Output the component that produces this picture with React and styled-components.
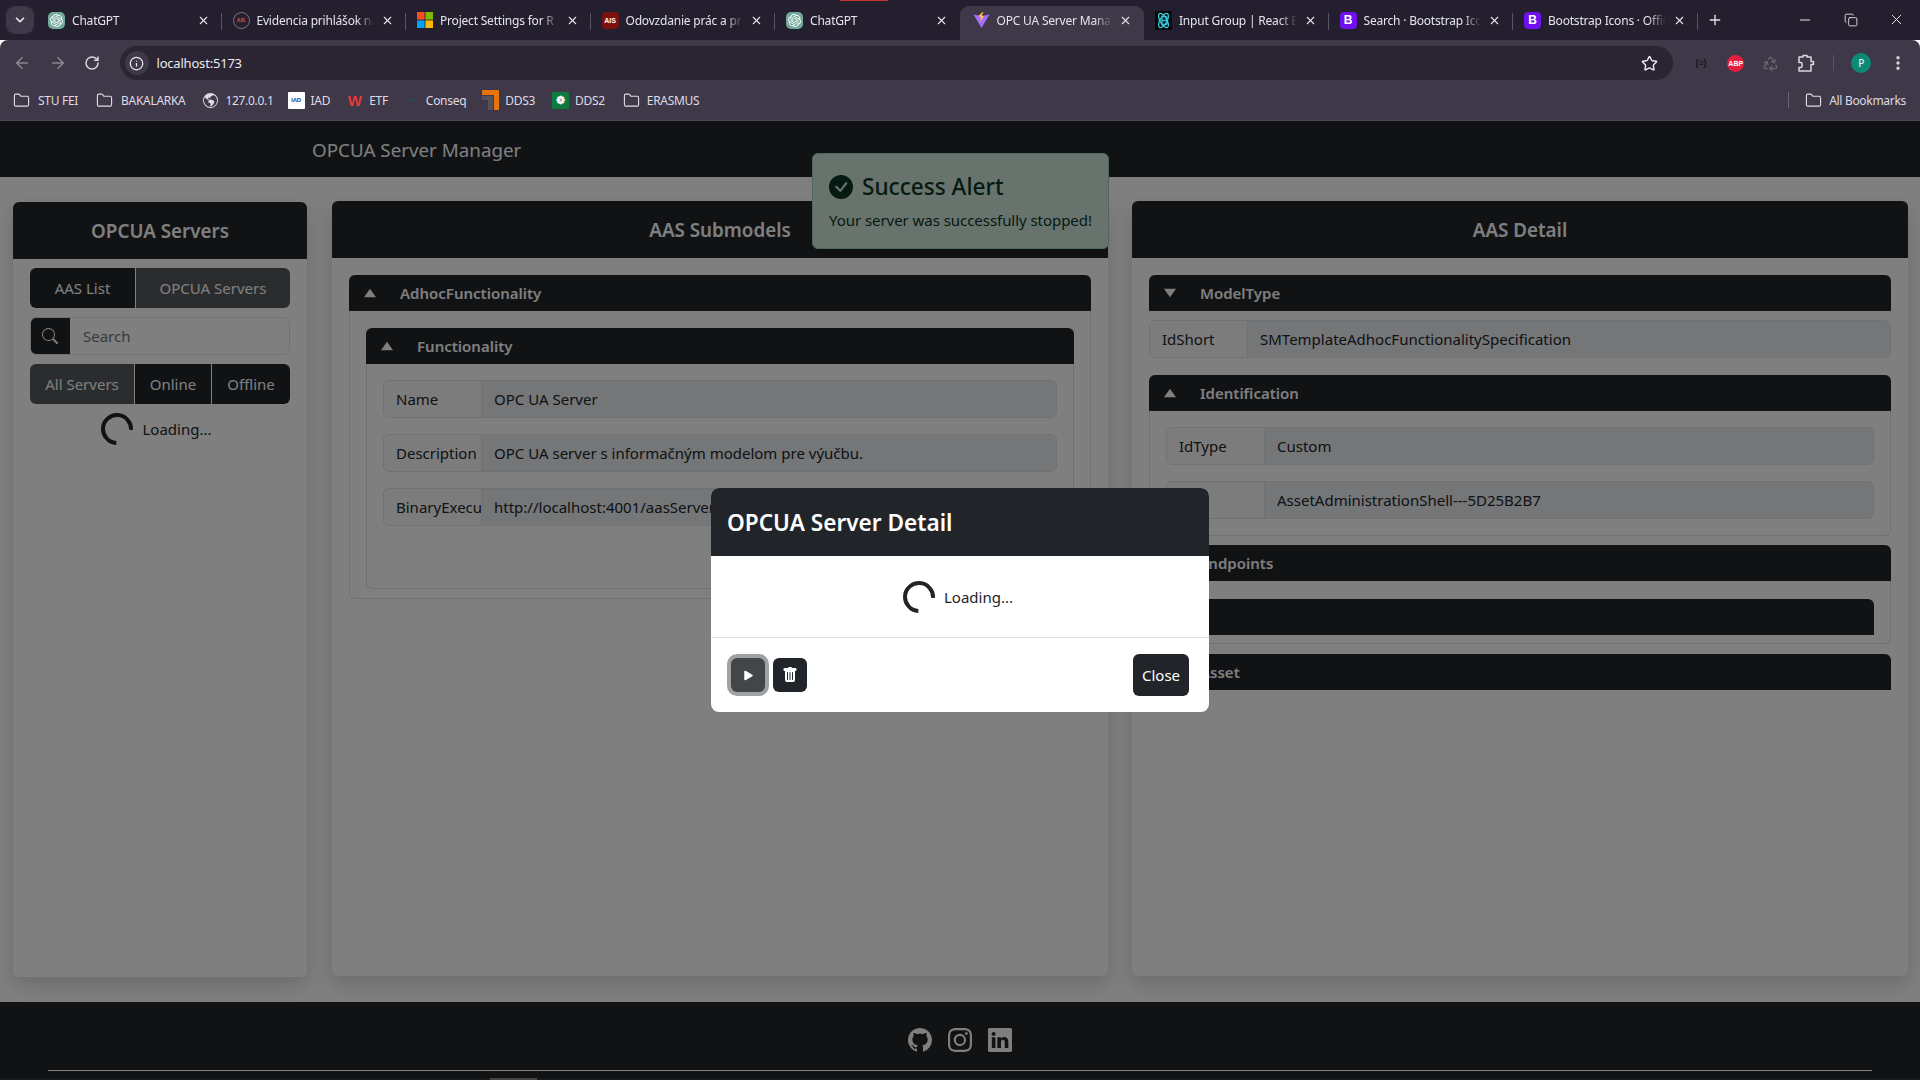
import React from 'react';
import styled, { createGlobalStyle } from 'styled-components';
import { ArrowLeft, ArrowRight, RotateCw, Info, Star, Folder, Plus, Minus, X, ChevronDown, Recycle, Copy, EllipsisVertical } from 'lucide-react';
import { BsGithub, BsInstagram, BsLinkedin, BsSearch, BsCheckCircleFill, BsPlayFill, BsTrashFill, BsGlobeAmericas } from 'react-icons/bs';
import { SiOpenai } from 'react-icons/si';

const GlobalStyle = createGlobalStyle`
  * { box-sizing: border-box; }
  html, body { margin: 0; padding: 0; background: #fff; overflow: hidden; }
  body { font-family: "Noto Sans", "Open Sans", sans-serif; font-size: 15px; color: #212529; }
`;

const Screen = styled.div`
  width: 1920px;
  height: 1080px;
  display: flex;
  flex-direction: column;
  overflow: hidden;
`;

/* browser chrome */
const TabStrip = styled.div`
  position: relative;
  height: 40px;
  flex: none;
  display: flex;
  align-items: flex-end;
  padding-left: 37px;
  background: #241f2e;
  color: #e6e3ec;
`;

const TabListButton = styled.div`
  position: absolute;
  left: 6px;
  top: 6px;
  width: 28px;
  height: 28px;
  border-radius: 9px;
  background: #3e3848;
  display: flex;
  align-items: center;
  justify-content: center;
`;

const RedMark = styled.div`
  position: absolute;
  left: 840px;
  top: 0;
  width: 48px;
  height: 1px;
  background: #c8312c;
`;

const TabItem = styled.div`
  position: relative;
  width: 184.5px;
  height: 34px;
  flex: none;
  display: flex;
  align-items: center;
  gap: 7px;
  padding: 0 12px 6px ${p => (p.$active ? 13 : 11)}px;
  font-size: 12px;
  border-radius: 9px 9px 0 0;
  background: ${p => (p.$active ? '#3e3848' : 'transparent')};
  &::after {
    content: '';
    display: ${p => (p.$sep ? 'block' : 'none')};
    position: absolute;
    right: 0;
    top: 7px;
    width: 1px;
    height: 17px;
    background: #5a5465;
  }
`;

const TabTitle = styled.span`
  flex: 1;
  min-width: 0;
  white-space: nowrap;
  overflow: hidden;
  letter-spacing: -0.2px;
  -webkit-mask-image: linear-gradient(to right, #000 85%, transparent);
  mask-image: linear-gradient(to right, #000 85%, transparent);
`;

const Favicon = styled.span`
  width: 17px;
  height: 17px;
  flex: none;
  display: flex;
  align-items: center;
  justify-content: center;
  border-radius: ${p => p.$radius || 3}px;
  background: ${p => p.$bg || 'transparent'};
  border: ${p => (p.$ring ? `1.5px solid ${p.$ring}` : 'none')};
  color: ${p => p.$fg || '#fff'};
  font-size: ${p => p.$size || 12}px;
  font-weight: 700;
  font-family: "Liberation Sans", sans-serif;
`;

const StripButton = styled.div`
  position: absolute;
  top: ${p => p.$y || 12}px;
  left: ${p => p.$x}px;
  display: flex;
`;

const Toolbar = styled.div`
  height: 40px;
  flex: none;
  display: flex;
  align-items: center;
  padding: 6px 13px 0 13px;
  background: #3e3848;
  border-radius: 8px 8px 0 0;
  color: #d9d6df;
`;

const NavIcon = styled.span`
  width: 35.5px;
  display: flex;
  color: ${p => (p.$dim ? '#8a8593' : '#d9d6df')};
`;

const AddressBar = styled.div`
  flex: none;
  width: 1553px;
  height: 34px;
  padding: 0 15px 0 5px;
  display: flex;
  align-items: center;
  border-radius: 17px;
  background: #2a2433;
  font-size: 13px;
  color: #eceaf0;
`;

const SiteInfo = styled.span`
  width: 24px;
  height: 24px;
  margin-right: 8px;
  border-radius: 50%;
  background: #3e3848;
  display: flex;
  align-items: center;
  justify-content: center;
`;

const Url = styled.span`
  flex: 1;
  letter-spacing: -0.2px;
`;

const ExtIcons = styled.div`
  flex: 1;
  display: flex;
  align-items: center;
  justify-content: space-between;
  padding: 0 0 0 20px;
`;

const ExtDivider = styled.span`
  width: 1px;
  height: 16px;
  background: #5a5465;
`;

const AbpBadge = styled.span`
  width: 17px;
  height: 17px;
  border-radius: 50%;
  background: #e5203f;
  color: #fff;
  font-size: 7px;
  font-weight: 700;
  display: flex;
  align-items: center;
  justify-content: center;
  font-family: "Liberation Sans", sans-serif;
`;

const Profile = styled.span`
  width: 20px;
  height: 20px;
  border-radius: 50%;
  background: #0c8a76;
  color: #fff;
  font-size: 10px;
  display: flex;
  align-items: center;
  justify-content: center;
`;

const Bookmarks = styled.div`
  height: 41px;
  flex: none;
  display: flex;
  align-items: center;
  padding: 0 14px 0 13px;
  background: #3e3848;
  border-bottom: 1px solid #4c4656;
  font-size: 12px;
  color: #dedbe4;
`;

const Bookmark = styled.div`
  display: flex;
  align-items: center;
  gap: ${p => p.$gap ?? 6}px;
  margin-right: ${p => p.$mr ?? 17}px;
  letter-spacing: -0.3px;
  white-space: nowrap;
`;

const BookmarkSpacer = styled.div`
  flex: 1;
`;

const BookmarkDivider = styled.span`
  width: 1px;
  height: 16px;
  margin-right: 16px;
  background: #6a6475;
`;

/* page */
const Page = styled.div`
  position: relative;
  flex: 1;
  min-height: 0;
  display: flex;
  flex-direction: column;
  background: #fff;
`;

const Navbar = styled.header`
  height: 56px;
  flex: none;
  display: flex;
  align-items: center;
  padding: 1px 0 0 312px;
  background: #212529;
  color: #fff;
  font-size: 18.8px;
`;

const Main = styled.main`
  flex: 1;
  min-height: 0;
  display: flex;
  align-items: flex-start;
  gap: 24px;
  padding: 24px 12px 25px 13px;
`;

const Card = styled.section`
  width: ${p => p.$w}px;
  height: ${p => p.$h || 775}px;
  margin-top: ${p => p.$mt || 0}px;
  margin-right: ${p => p.$mr || 0}px;
  flex: none;
  border-radius: 6px;
  background: #fff;
  box-shadow: 0 8px 20px rgba(0, 0, 0, 0.16);
`;

const CardHeader = styled.div`
  height: 57px;
  display: flex;
  align-items: center;
  justify-content: center;
  border-radius: 6px 6px 0 0;
  background: #212529;
  color: #fff;
  font-size: 18.8px;
  font-weight: 600;
`;

const CardBody = styled.div`
  padding: ${p => p.$pt ?? 17}px 17px 0;
`;

const ButtonGroup = styled.div`
  display: flex;
  height: 40px;
  margin-bottom: 9px;
  gap: 1px;
  border-radius: 6px;
  overflow: hidden;
`;

const GroupButton = styled.div`
  width: ${p => p.$w}px;
  flex: ${p => (p.$w ? 'none' : 1)};
  display: flex;
  align-items: center;
  justify-content: center;
  background: ${p => (p.$active ? '#55585c' : '#212529')};
  color: #fff;
`;

const SearchGroup = styled.div`
  display: flex;
  height: 38px;
  margin-bottom: 9px;
  border: 1px solid #dee2e6;
  border-radius: 6px;
  overflow: hidden;
`;

const SearchIcon = styled.span`
  width: 40px;
  margin: -1px 0 -1px -1px;
  display: flex;
  align-items: center;
  justify-content: center;
  background: #212529;
  color: #fff;
`;

const SearchPlaceholder = styled.span`
  flex: 1;
  display: flex;
  align-items: center;
  padding-left: 13px;
  color: #6c757d;
`;

const LoadingRow = styled.div`
  display: flex;
  align-items: center;
  justify-content: center;
  gap: 9px;
  margin-right: ${p => p.$shift || 0}px;
`;

const Spinner = styled.span`
  width: 32px;
  height: 32px;
  flex: none;
  border: 4px solid #212529;
  border-right-color: transparent;
  border-radius: 50%;
  transform: rotate(48deg);
`;

const AccordionHead = styled.div`
  height: 36px;
  display: flex;
  align-items: center;
  padding-left: 14px;
  gap: 23px;
  border-radius: 6px 6px 0 0;
  background: #212529;
  color: #fff;
  font-weight: 600;
`;

const Section = styled.div`
  margin-bottom: ${p => p.$mb || 0}px;
`;

const SectionBody = styled.div`
  padding: ${p => p.$pt ?? 16}px 16px ${p => p.$pb ?? 0}px;
  border: 1px solid #dee2e6;
  border-top: 0;
  border-radius: 0 0 6px 6px;
`;

const Field = styled.div`
  display: flex;
  height: 38px;
  margin-bottom: ${p => p.$mb ?? 16}px;
  border: 1px solid #dee2e6;
  border-radius: 6px;
  overflow: hidden;
`;

const FieldLabel = styled.span`
  width: 98px;
  flex: none;
  padding: 0 0 0 12px;
  display: flex;
  align-items: center;
  overflow: hidden;
  white-space: nowrap;
  background: #f8f9fa;
  border-right: 1px solid #dee2e6;
`;

const FieldValue = styled.span`
  flex: 1;
  padding-left: 12px;
  display: flex;
  align-items: center;
  white-space: nowrap;
  overflow: hidden;
  background: #e9ecef;
`;

const EndpointBar = styled.div`
  height: 36px;
  border-radius: 6px 6px 0 0;
  background: #212529;
`;

const Alert = styled.div`
  position: absolute;
  left: 812px;
  top: 32px;
  width: 297px;
  height: 96px;
  padding: 15px 16px;
  border: 1px solid #a3cfbb;
  border-radius: 6px;
  background: #d1e7dd;
  color: #0a3622;
`;

const AlertHeading = styled.div`
  display: flex;
  align-items: center;
  gap: 9px;
  margin-bottom: 3px;
  font-size: 22.6px;
  line-height: 36px;
  font-weight: 500;
`;

const AlertText = styled.div`
  white-space: nowrap;
  line-height: 24px;
  letter-spacing: -0.05px;
`;

const Footer = styled.footer`
  position: relative;
  height: 78px;
  flex: none;
  padding: 0 48px;
  background: #212529;
  color: #fff;
`;

const SocialRow = styled.div`
  height: 69px;
  padding-top: 7px;
  display: flex;
  align-items: center;
  justify-content: center;
  gap: 16px;
  border-bottom: 1px solid #fff;
`;

const ScrollTrack = styled.div`
  position: absolute;
  left: 0;
  right: 0;
  bottom: 0;
  height: 2px;
  background: #303437;
`;

const ScrollThumb = styled.div`
  margin-left: 490px;
  width: 47px;
  height: 2px;
  background: #8a8a8a;
`;

const Backdrop = styled.div`
  position: absolute;
  inset: 0;
  display: flex;
  justify-content: center;
  align-items: flex-start;
  padding-top: 367px;
  background: rgba(0, 0, 0, 0.5);
`;

const Modal = styled.div`
  width: 498px;
  height: 224px;
  display: flex;
  flex-direction: column;
  border-radius: 8px;
  overflow: hidden;
  background: #fff;
`;

const ModalHeader = styled.div`
  height: 68px;
  flex: none;
  display: flex;
  align-items: center;
  padding: 1px 0 0 16px;
  background: #212529;
  color: #fff;
  font-size: 22.6px;
  font-weight: 600;
`;

const ModalBody = styled.div`
  height: 82px;
  flex: none;
  display: flex;
  align-items: center;
  justify-content: center;
  padding-top: 1px;
  border-bottom: 1px solid #dee2e6;
`;

const ModalFooter = styled.div`
  flex: 1;
  display: flex;
  align-items: center;
  gap: 5px;
  padding: 0 20px 0 20px;
`;

const IconButton = styled.span`
  width: 34px;
  height: 34px;
  display: flex;
  align-items: center;
  justify-content: center;
  border-radius: 6px;
  background: ${p => (p.$focus ? '#424649' : '#212529')};
  color: #fff;
  margin-right: ${p => (p.$focus ? 3 : 0)}px;
  box-shadow: ${p => (p.$focus ? '0 0 0 4px rgba(66, 70, 73, 0.5)' : 'none')};
`;

const CloseButton = styled.span`
  margin-left: auto;
  width: 56px;
  height: 42px;
  display: flex;
  align-items: center;
  justify-content: center;
  border-radius: 6px;
  background: #212529;
  color: #fff;
`;

const TriangleIcon = ({ down }) => (
  <svg width="14" height="10" viewBox="0 0 14 10" style={down ? { transform: 'rotate(180deg)' } : undefined}>
    <path d="M7 .8 13 9.2H1z" fill="currentColor" />
  </svg>
);

const MicrosoftIcon = () => (
  <svg width="16" height="16" viewBox="0 0 16 16">
    <path d="M0 0h7.6v7.6H0z" fill="#f25022" />
    <path d="M8.4 0H16v7.6H8.4z" fill="#7fba00" />
    <path d="M0 8.4h7.6V16H0z" fill="#00a4ef" />
    <path d="M8.4 8.4H16V16H8.4z" fill="#ffb900" />
  </svg>
);

const ViteIcon = () => (
  <svg width="17" height="17" viewBox="0 0 17 17">
    <path d="M.5 2.5 8.5 16l8-13.5-5 1-3 .6-3-.6z" fill="#a66bff" />
    <path d="M9.5 0 5.5 4l2.5 1-1 5 4-6-2.3-.4L10.5 0z" fill="#ffcc33" />
  </svg>
);

const ReactBootstrapIcon = () => (
  <svg width="17" height="19" viewBox="0 0 17 19" fill="none" stroke="#38c8de" strokeWidth="1.3">
    <rect width="17" height="19" fill="#0a0a0a" stroke="none" />
    <ellipse cx="8.5" cy="9.5" rx="3.4" ry="8" transform="rotate(30 8.5 9.5)" />
    <ellipse cx="8.5" cy="9.5" rx="3.4" ry="8" transform="rotate(-30 8.5 9.5)" />
    <path d="M7 5.5h3a1.8 1.8 0 0 1 0 4H7zm0 4h3.4a2 2 0 0 1 0 4H7z" />
  </svg>
);

const ExtensionIcon = () => (
  <svg width="18" height="20" viewBox="0 0 18 20" fill="none" stroke="currentColor" strokeWidth="1.5" strokeLinejoin="round">
    <path d="M2 4h4V2.500h4V4h4v4.500h2.500v3H14V18H2v-3.500h2c1.500 0 1.500-5 0-5H2z" />
  </svg>
);

const Dds3Icon = () => (
  <svg width="17" height="20" viewBox="0 0 17 20">
    <path d="M0 0h17v20h-5V5H0z" fill="#e8730c" />
    <path d="M0 6h11v14H6V10H0z" fill="#55505c" />
  </svg>
);

const tabs = [
  { title: 'ChatGPT', icon: <Favicon $bg="#74aa9c" $radius={5}><SiOpenai size={13} /></Favicon>, sep: true },
  { title: 'Evidencia prihlášok na', icon: <Favicon $bg="#2b1f2b" $radius={9} $ring="#7a7480" $fg="#d65050" $size={5}>AIS</Favicon>, sep: true },
  { title: 'Project Settings for R', icon: <MicrosoftIcon />, sep: true },
  { title: 'Odovzdanie prác a pr', icon: <Favicon $bg="#7a1010" $radius={4} $size={7}>AIS</Favicon>, sep: true },
  { title: 'ChatGPT', icon: <Favicon $bg="#74aa9c" $radius={5}><SiOpenai size={13} /></Favicon> },
  { title: 'OPC UA Server Mana', icon: <ViteIcon />, active: true },
  { title: 'Input Group | React B', icon: <ReactBootstrapIcon />, sep: true },
  { title: 'Search · Bootstrap Ico', icon: <Favicon $bg="#7010f0" $radius={4}>B</Favicon>, sep: true },
  { title: 'Bootstrap Icons · Offic', icon: <Favicon $bg="#7010f0" $radius={4}>B</Favicon>, sep: true },
];

const bookmarks = [
  { label: 'STU FEI', icon: <Folder size={17} strokeWidth={1.6} />, gap: 8, mr: 18 },
  { label: 'BAKALARKA', icon: <Folder size={17} strokeWidth={1.6} />, gap: 8, mr: 18 },
  { label: '127.0.0.1', icon: <BsGlobeAmericas size={15} />, gap: 7, mr: 14 },
  { label: 'IAD', icon: <Favicon $bg="#fff" $fg="#1b3f8f" $radius={1} $size={6}>IAD</Favicon>, mr: 16 },
  { label: 'ETF', icon: <Favicon $fg="#e53935" $size={15}>W</Favicon>, mr: 15 },
  { label: 'Conseq', icon: <Favicon $fg="#2f4a63" $size={6}>▪▪▪▪</Favicon>, mr: 16 },
  { label: 'DDS3', icon: <Dds3Icon />, mr: 17 },
  { label: 'DDS2', icon: <Favicon $bg="#0d7a3e" $radius={1} $fg="#eee" $size={11}>❁</Favicon>, mr: 18 },
  { label: 'ERASMUS', icon: <Folder size={17} strokeWidth={1.6} />, gap: 7, mr: 0 },
];

const BrowserChrome = () => (
  <>
    <TabStrip>
      <RedMark />
      <TabListButton><ChevronDown size={14} strokeWidth={3} /></TabListButton>
      {tabs.map((t, i) => (
        <TabItem key={i} $active={t.active} $sep={t.sep}>
          {t.icon}
          <TabTitle>{t.title}</TabTitle>
          <X size={13} strokeWidth={2} />
        </TabItem>
      ))}
      <StripButton $x={1707}><Plus size={16} strokeWidth={2} /></StripButton>
      <StripButton $x={1797}><Minus size={16} strokeWidth={1.5} /></StripButton>
      <StripButton $x={1844} $y={13}><Copy size={14} strokeWidth={1.5} /></StripButton>
      <StripButton $x={1888} $y={11}><X size={17} strokeWidth={1.4} /></StripButton>
    </TabStrip>
    <Toolbar>
      <NavIcon $dim><ArrowLeft size={18} /></NavIcon>
      <NavIcon $dim><ArrowRight size={18} /></NavIcon>
      <NavIcon><RotateCw size={16} strokeWidth={2.2} /></NavIcon>
      <AddressBar>
        <SiteInfo><Info size={15} /></SiteInfo>
        <Url>localhost:5173</Url>
        <Star size={17} strokeWidth={2} />
      </AddressBar>
      <ExtIcons>
        <Favicon $fg="#15131a" $size={9}>(≡)</Favicon>
        <AbpBadge>ABP</AbpBadge>
        <Recycle size={17} color="#68646e" />
        <ExtensionIcon />
        <ExtDivider />
        <Profile>P</Profile>
        <EllipsisVertical size={18} strokeWidth={2.6} />
      </ExtIcons>
    </Toolbar>
    <Bookmarks>
      {bookmarks.map(b => (
        <Bookmark key={b.label} $mr={b.mr} $gap={b.gap}>{b.icon}{b.label}</Bookmark>
      ))}
      <BookmarkSpacer />
      <BookmarkDivider />
      <Bookmark $mr={0} $gap={7}><Folder size={17} strokeWidth={1.6} />All Bookmarks</Bookmark>
    </Bookmarks>
  </>
);

const LeftCard = () => (
  <Card $w={294} $mt={1} $mr={1}>
    <CardHeader>OPCUA Servers</CardHeader>
    <CardBody $pt={9}>
      <ButtonGroup>
        <GroupButton $w={105}>AAS List</GroupButton>
        <GroupButton $active>OPCUA Servers</GroupButton>
      </ButtonGroup>
      <SearchGroup>
        <SearchIcon><BsSearch size={16} /></SearchIcon>
        <SearchPlaceholder>Search</SearchPlaceholder>
      </SearchGroup>
      <ButtonGroup>
        <GroupButton $w={104} $active>All Servers</GroupButton>
        <GroupButton $w={76}>Online</GroupButton>
        <GroupButton>Offline</GroupButton>
      </ButtonGroup>
      <LoadingRow $shift={7}><Spinner />Loading...</LoadingRow>
    </CardBody>
  </Card>
);

const MiddleCard = () => (
  <Card $w={776}>
    <CardHeader>AAS Submodels</CardHeader>
    <CardBody>
      <AccordionHead><TriangleIcon />AdhocFunctionality</AccordionHead>
      <SectionBody $pt={17} $pb={9}>
        <AccordionHead><TriangleIcon />Functionality</AccordionHead>
        <SectionBody $pb={46}>
          <Field><FieldLabel>Name</FieldLabel><FieldValue>OPC UA Server</FieldValue></Field>
          <Field><FieldLabel>Description</FieldLabel><FieldValue>OPC UA server s informačným modelom pre výučbu.</FieldValue></Field>
          <Field><FieldLabel>BinaryExecutable</FieldLabel><FieldValue>http://localhost:4001/aasServer/shells</FieldValue></Field>
        </SectionBody>
      </SectionBody>
    </CardBody>
  </Card>
);

const RightCard = () => (
  <Card $w={776}>
    <CardHeader>AAS Detail</CardHeader>
    <CardBody>
      <Section $mb={9}>
        <AccordionHead><TriangleIcon down />ModelType</AccordionHead>
      </Section>
      <Field $mb={17}><FieldLabel>IdShort</FieldLabel><FieldValue>SMTemplateAdhocFunctionalitySpecification</FieldValue></Field>
      <Section $mb={9}>
        <AccordionHead><TriangleIcon />Identification</AccordionHead>
        <SectionBody>
          <Field><FieldLabel>IdType</FieldLabel><FieldValue>Custom</FieldValue></Field>
          <Field><FieldLabel>Id</FieldLabel><FieldValue>AssetAdministrationShell---5D25B2B7</FieldValue></Field>
        </SectionBody>
      </Section>
      <Section $mb={10}>
        <AccordionHead><TriangleIcon />Endpoints</AccordionHead>
        <SectionBody $pt={18} $pb={8}>
          <EndpointBar />
        </SectionBody>
      </Section>
      <AccordionHead><TriangleIcon down />Asset</AccordionHead>
    </CardBody>
  </Card>
);

const App = () => (
  <Screen>
    <GlobalStyle />
    <BrowserChrome />
    <Page>
      <Navbar>OPCUA Server Manager</Navbar>
      <Main>
        <LeftCard />
        <MiddleCard />
        <RightCard />
      </Main>
      <Footer>
        <SocialRow>
          <BsGithub size={24} />
          <BsInstagram size={24} />
          <BsLinkedin size={24} />
        </SocialRow>
        <ScrollTrack><ScrollThumb /></ScrollTrack>
      </Footer>
      <Alert>
        <AlertHeading><BsCheckCircleFill size={24} />Success Alert</AlertHeading>
        <AlertText>Your server was successfully stopped!</AlertText>
      </Alert>
      <Backdrop>
        <Modal>
          <ModalHeader>OPCUA Server Detail</ModalHeader>
          <ModalBody><LoadingRow $shift={4}><Spinner />Loading...</LoadingRow></ModalBody>
          <ModalFooter>
            <IconButton $focus><BsPlayFill size={17} /></IconButton>
            <IconButton><BsTrashFill size={16} /></IconButton>
            <CloseButton>Close</CloseButton>
          </ModalFooter>
        </Modal>
      </Backdrop>
    </Page>
  </Screen>
);

export default App;
